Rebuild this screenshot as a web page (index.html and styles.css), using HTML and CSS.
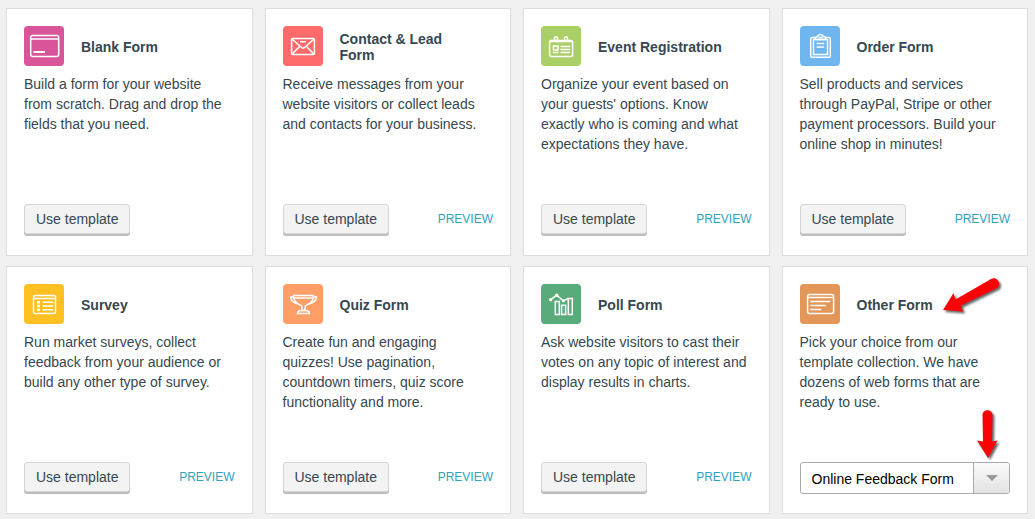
FILE: index.html
```
<!DOCTYPE html>
<html lang="en">
<head>
    <meta charset="UTF-8">
    <meta name="viewport" content="width=device-width, initial-scale=1.0">
    <title>Form Templates</title>
    <link rel="stylesheet" href="styles.css">
</head>
<body>
    <main class="templates">
        <section class="card">
            <div class="card-head">
                <svg class="icon icon-blank" viewBox="0 0 40 40" aria-hidden="true">
                    <rect x="6.7" y="9.6" width="28" height="21" rx="2"/>
                    <path d="M7 13h27.5"/>
                    <path d="M9.500 26H21" stroke-width="2"/>
                </svg>
                <h2>Blank Form</h2>
            </div>
            <p>Build a form for your website from scratch. Drag and drop the fields that you need.</p>
            <div class="card-foot">
                <button type="button" class="use-btn">Use template</button>
            </div>
        </section>
        <section class="card">
            <div class="card-head">
                <svg class="icon icon-contact" viewBox="0 0 40 40" aria-hidden="true">
                    <rect x="8.600" y="12.600" width="22.800" height="16" rx="1"/>
                    <path d="M9 13l9.500 8.500q1.500 1.300 3 0L31 13M9 28.300l7.500-7.800M31 28.300l-7.500-7.800M17 15.700h6"/>
                </svg>
                <h2>Contact &amp; Lead Form</h2>
            </div>
            <p>Receive messages from your website visitors or collect leads and contacts for your business.</p>
            <div class="card-foot">
                <button type="button" class="use-btn">Use template</button>
                <a href="#" class="preview">PREVIEW</a>
            </div>
        </section>
        <section class="card">
            <div class="card-head">
                <svg class="icon icon-event" viewBox="0 0 40 40" aria-hidden="true">
                    <rect x="8.600" y="14.600" width="23" height="15.800" rx="1.800"/>
                    <path d="M9 15.500h22.500"/>
                    <path d="M13.500 14v-2q0-1.300 1.500-1.300t1.500 1.300v2M23.500 14v-2q0-1.300 1.500-1.300t1.500 1.300v2"/>
                    <rect x="12.500" y="20" width="4.500" height="4"/>
                    <path d="M19.500 20.500H29M19.500 23.500H29M12 26.500h5.500M19.500 26.500H29"/>
                </svg>
                <h2>Event Registration</h2>
            </div>
            <p>Organize your event based on your guests' options. Know exactly who is coming and what expectations they have.</p>
            <div class="card-foot">
                <button type="button" class="use-btn">Use template</button>
                <a href="#" class="preview">PREVIEW</a>
            </div>
        </section>
        <section class="card">
            <div class="card-head">
                <svg class="icon icon-order" viewBox="0 0 40 40" aria-hidden="true">
                    <path d="M15 11.500h-3q-1.300 0-1.300 1.300v17.200q0 1.300 1.300 1.300h17q1.300 0 1.300-1.300V12.800q0-1.300-1.300-1.300h-3"/>
                    <rect x="13.500" y="13.500" width="14" height="15"/>
                    <path d="M15.500 13.500v-2.200l2.200-.8q.5-2 2.800-2t2.800 2l2.200.8v2.200zM18.500 11.500h4M16.700 17.500h7.500M16.700 21h7.500"/>
                </svg>
                <h2>Order Form</h2>
            </div>
            <p>Sell products and services through PayPal, Stripe or other payment processors. Build your online shop in minutes!</p>
            <div class="card-foot">
                <button type="button" class="use-btn">Use template</button>
                <a href="#" class="preview">PREVIEW</a>
            </div>
        </section>
        <section class="card">
            <div class="card-head">
                <svg class="icon icon-survey" viewBox="0 0 40 40" aria-hidden="true">
                    <rect x="9.500" y="11.600" width="22" height="17.800" rx="1.800"/>
                    <path d="M10 14.500h21.500M18.700 18.300H29M18.700 22H29M18.700 25.700H29"/>
                    <path d="M13 18.300h3M13 22h3M13 25.700h3" stroke-width="2.500"/>
                </svg>
                <h2>Survey</h2>
            </div>
            <p>Run market surveys, collect feedback from your audience or build any other type of survey.</p>
            <div class="card-foot">
                <button type="button" class="use-btn">Use template</button>
                <a href="#" class="preview">PREVIEW</a>
            </div>
        </section>
        <section class="card">
            <div class="card-head">
                <svg class="icon icon-quiz" viewBox="0 0 40 40" aria-hidden="true">
                    <path d="M10.600 11.600h19.800v2.500q-1.500 5-7.900 7.500l-.8 5h-2.400l-.8-5q-6.400-2.500-7.900-7.500z"/>
                    <path d="M11 14h19M10.500 13H7.600q0 5.500 8.500 7M30.500 13h2.900q0 5.500-8.500 7"/>
                    <path d="M14.500 29.400q.2-2.800 4-2.800h4q3.800 0 4 2.800z"/>
                </svg>
                <h2>Quiz Form</h2>
            </div>
            <p>Create fun and engaging quizzes! Use pagination, countdown timers, quiz score functionality and more.</p>
            <div class="card-foot">
                <button type="button" class="use-btn">Use template</button>
                <a href="#" class="preview">PREVIEW</a>
            </div>
        </section>
        <section class="card">
            <div class="card-head">
                <svg class="icon icon-poll" viewBox="0 0 40 40" aria-hidden="true">
                    <path d="M14.300 17.600h4v12.800h-4zM20.600 21.200h4v9.200h-4zM27.300 14.600h4v15.800h-4z"/>
                    <path d="M9.700 15.700l6-4.500 6.500 5.500 5-2"/>
                    <g class="dots">
                        <circle cx="9.700" cy="15.700" r="1.700"/>
                        <circle cx="15.700" cy="11.200" r="1.700"/>
                        <circle cx="22.300" cy="16.700" r="1.500"/>
                    </g>
                </svg>
                <h2>Poll Form</h2>
            </div>
            <p>Ask website visitors to cast their votes on any topic of interest and display results in charts.</p>
            <div class="card-foot">
                <button type="button" class="use-btn">Use template</button>
                <a href="#" class="preview">PREVIEW</a>
            </div>
        </section>
        <section class="card">
            <div class="card-head">
                <svg class="icon icon-other" viewBox="0 0 40 40" aria-hidden="true">
                    <rect x="7.600" y="10.600" width="26" height="18.800" rx="1.800"/>
                    <path d="M8 13.500h25.500M10.300 17.500h20M10.300 21.500h15.500M10.300 25.500h11"/>
                </svg>
                <h2>Other Form</h2>
                <svg class="arrow arrow-title" viewBox="0 0 60 40" aria-hidden="true">
                    <path d="M1 34L11.500 17l2 6.500L49 3c6-3 11 5 6 9L19 29.500l2 6z"/>
                </svg>
            </div>
            <p>Pick your choice from our template collection. We have dozens of web forms that are ready to use.</p>
            <div class="card-foot">
                <div class="select-wrap">
                    <select class="form-select" aria-label="Form template">
                        <option>Online Feedback Form</option>
                    </select>
                    <span class="select-toggle"></span>
                    <svg class="arrow arrow-select" viewBox="0 0 26 54" aria-hidden="true">
                        <path d="M6.500 6c0-6.500 10-6.500 10 0l-.5 26.500 5.500-1L12 49 1 31.500l6 1z"/>
                    </svg>
                </div>
            </div>
        </section>
    </main>
</body>
</html>
```
FILE: styles.css
```
* {
    box-sizing: border-box;
}
body {
    margin: 0;
    background: #f0f0f0;
    color: #36474f;
    font-family: "Liberation Sans", Arial, sans-serif;
    font-size: 14px;
    line-height: 20px;
}
.templates {
    display: grid;
    grid-template-columns: repeat(4, 1fr);
    gap: 10px 12px;
    padding: 8px 7px 5px 6px;
}
.card {
    display: flex;
    flex-direction: column;
    min-height: 248px;
    padding: 17px 17px 19px;
    background: #fff;
    border: 1px solid #ddd;
}
.card-head {
    position: relative;
    display: flex;
    align-items: center;
    gap: 17px;
    padding-right: 12px;
}
.card h2 {
    margin: 2px 0 0;
    font-size: 14px;
    line-height: 16px;
    font-weight: 700;
}
.card p {
    margin: 8px 0 16px;
    padding-right: 3px;
}
.card-foot {
    display: flex;
    align-items: center;
    justify-content: space-between;
    margin-top: auto;
}

/* Icons */
.icon {
    flex: none;
    width: 40px;
    height: 40px;
    border-radius: 4px;
    fill: none;
    stroke: #fff;
    stroke-width: 1.5;
}
.icon .dots {
    fill: #fff;
    stroke: none;
}
.icon-blank { background: #d9559a; }
.icon-contact { background: #ff6b6b; }
.icon-event { background: #aacf67; }
.icon-order { background: #6fb6ee; }
.icon-survey { background: #ffc022; }
.icon-quiz { background: #ff9e66; }
.icon-poll { background: #5aab7c; }
.icon-other { background: #e29658; }

/* Controls */
.use-btn {
    height: 30px;
    margin-bottom: 2px;
    padding: 0 11px;
    font-family: inherit;
    font-size: 14px;
    color: #36474f;
    background: #f3f3f3;
    border: 1px solid #d6d6d6;
    border-radius: 3px;
    box-shadow: 0 2px 0 #bdbdbd;
    cursor: pointer;
}
.use-btn:hover {
    background: #ebebeb;
}
.preview {
    margin-bottom: 3px;
    font-size: 12px;
    color: #2ea3bb;
    text-decoration: none;
}
.select-wrap {
    position: relative;
    display: flex;
    width: 100%;
}
.form-select {
    width: 100%;
    height: 32px;
    padding: 2px 37px 0 11px;
    appearance: none;
    font-family: inherit;
    font-size: 14px;
    color: #000;
    background: #fff;
    border: 1px solid #aaa;
    border-radius: 3px;
}
.select-toggle {
    position: absolute;
    top: 1px;
    right: 1px;
    bottom: 1px;
    width: 36px;
    border-left: 1px solid #aaa;
    border-radius: 0 2px 2px 0;
    background: linear-gradient(#fafafa, #e2e2e2);
    pointer-events: none;
}
.select-toggle::after {
    content: "";
    position: absolute;
    top: 12px;
    left: 12px;
    border: 6px solid transparent;
    border-top-color: #999;
    border-bottom: 0;
}

/* Pointer arrows */
.arrow {
    position: absolute;
    overflow: visible;
    fill: #fb0207;
    filter: drop-shadow(2px 2px 1px rgba(0, 0, 0, 0.6));
    pointer-events: none;
}
.arrow-title {
    top: -8px;
    left: 142px;
    width: 60px;
    height: 40px;
}
.arrow-select {
    right: 8px;
    bottom: 31px;
    width: 26px;
    height: 54px;
}

@media (max-width: 900px) {
    .templates {
        grid-template-columns: repeat(2, 1fr);
    }
}
@media (max-width: 480px) {
    .templates {
        grid-template-columns: 1fr;
    }
}
```
